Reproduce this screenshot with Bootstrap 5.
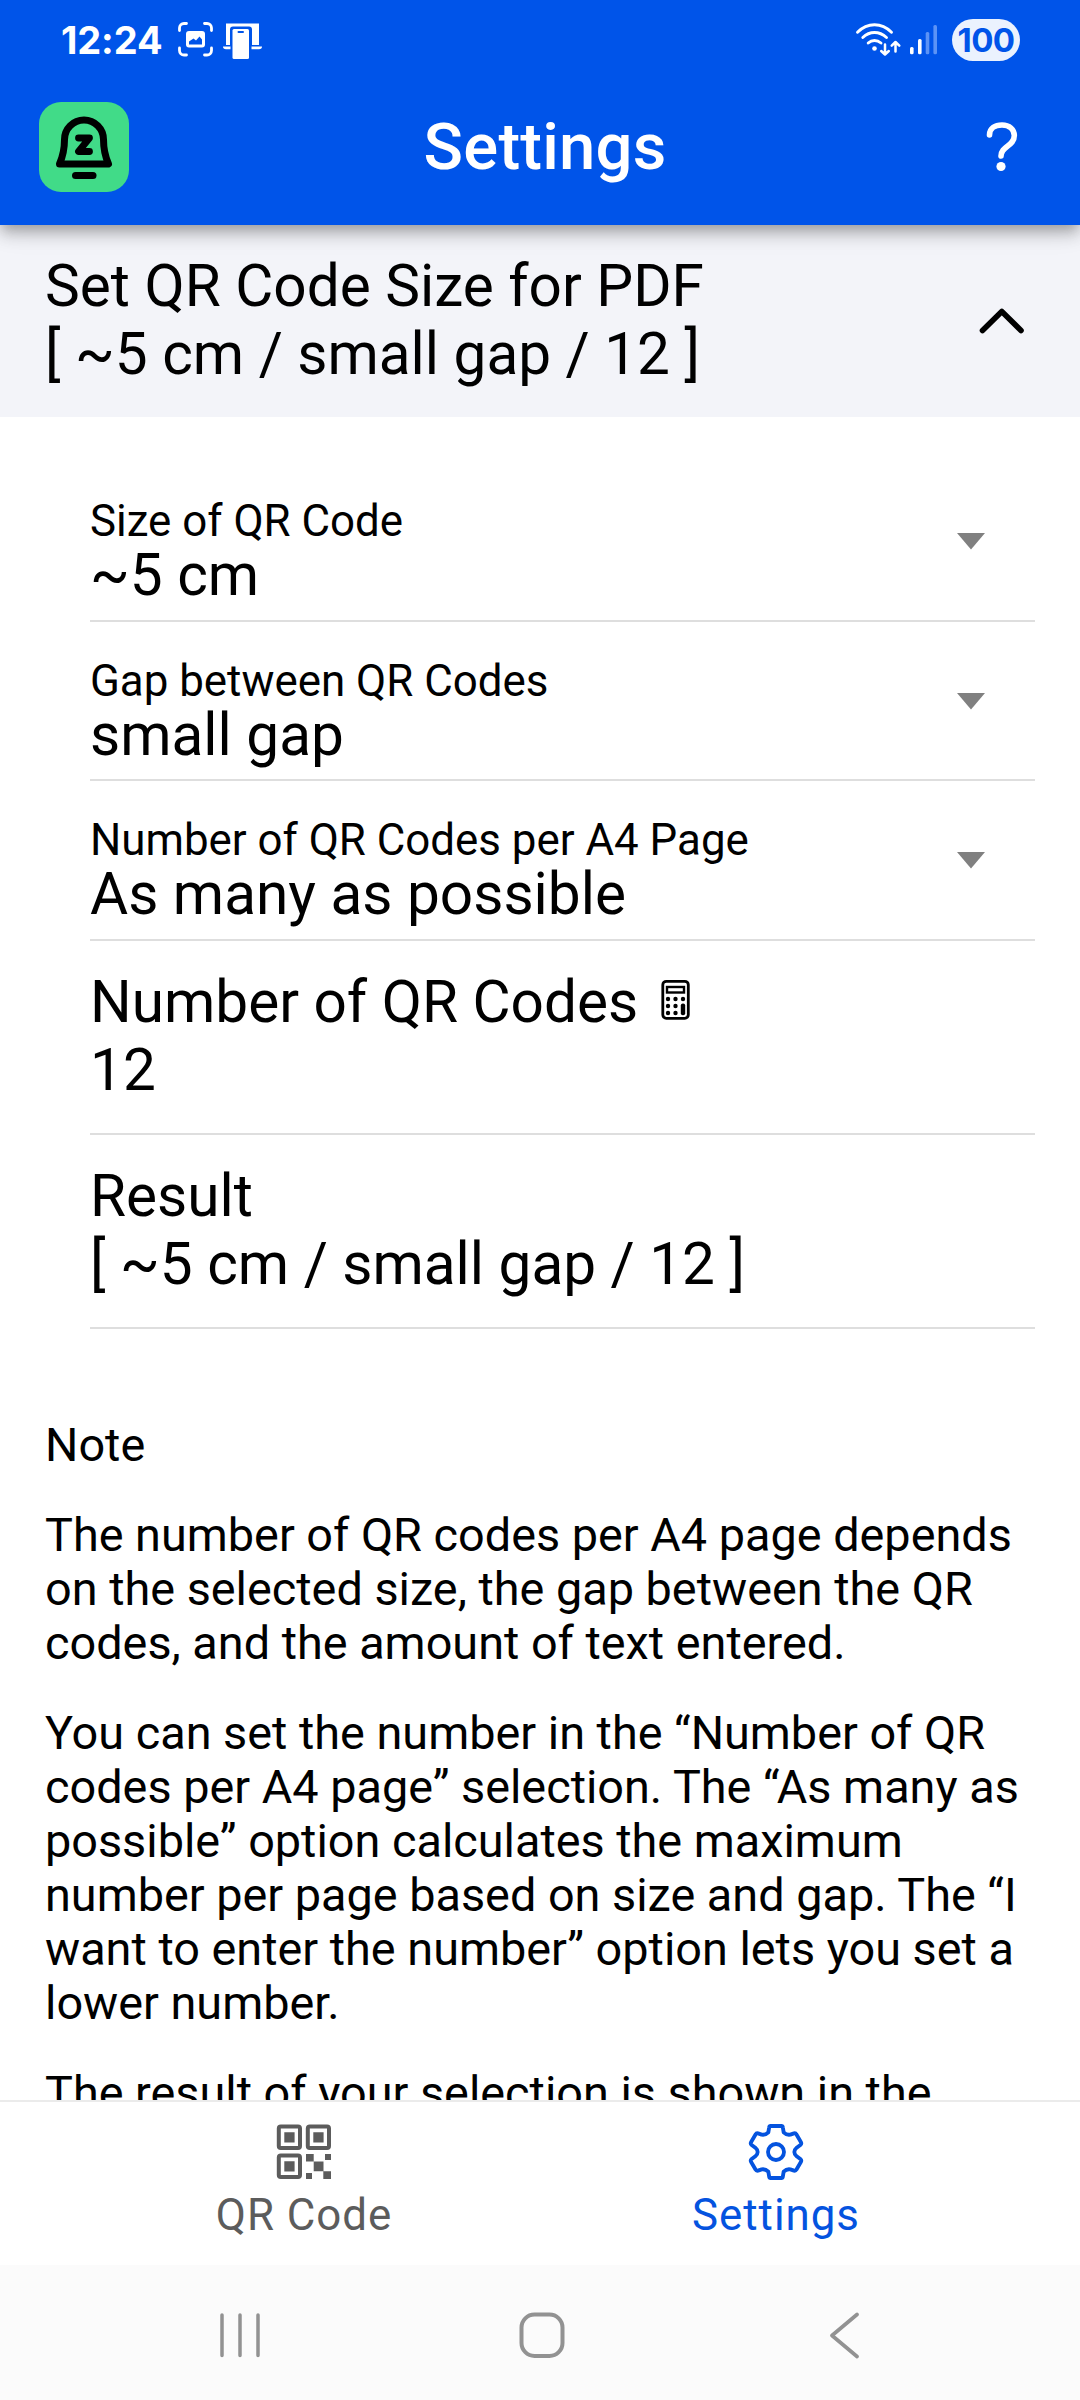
<!DOCTYPE html>
<html lang="en">
<head>
<meta charset="utf-8">
<meta name="viewport" content="width=device-width, initial-scale=1">
<title>Settings</title>
<link href="https://cdn.jsdelivr.net/npm/bootstrap@5.3.0/dist/css/bootstrap.min.css" rel="stylesheet">
<style>
  body { font-family: Roboto, sans-serif; color: #000; background: #fff; }
  svg { display: block; flex: none; }
  .screen { width: 1080px; height: 2400px; }
  .app-header { height: 225px; background: #0054e9; color: #fff; z-index: 2;
    box-shadow: 0 5.6px 11px -2.8px rgba(0,0,0,.2), 0 11px 14px rgba(0,0,0,.14), 0 2.8px 28px rgba(0,0,0,.12); }
  .status-bar { height: 69px; padding: 11px 60px 0 61px; }
  .clock { font: 700 38px/58px Inter, sans-serif; width: 116px; letter-spacing: -.1px; }
  .battery { width: 68px; height: 42px; border-radius: 21px; background: #ebf2fe; color: #0054e9;
    font: 700 33px/42px Inter, sans-serif; letter-spacing: -.6px; margin-left: 14px; }
  .toolbar { height: 156px; padding: 0 60px 0 39px; }
  .toolbar h1 { font-size: 65.2px; font-weight: 500; line-height: 78px; letter-spacing: .2px; }
  .toolbar-start { width: 125px; }
  .toolbar-end { width: 94px; }
  .accordion-head { height: 192px; padding: 0 54px 2px 45px; background: #f3f4f9; }
  .accordion-head svg { margin-top: 2px; }
  .big-text { font-size: 58.5px; line-height: 68px; }
  .option-list { padding: 45.4px 45px 0 90px; }
  .option-row { border-bottom: 2px solid #dedede; }
  .select-row { height: 159.5px; padding: 35.7px 50px 13.8px 0; }
  .select-label { font-size: 43.875px; line-height: 46px; }
  .select-value { font-size: 58.5px; line-height: 62px; }
  .caret { margin-top: 35.2px; }
  .info-row { height: 194px; padding: 27px 0 29px; }
  .calc-icon { margin-left: 22px; margin-bottom: 4px; }
  .note-text { padding: 89px 45px 0; font-size: 46.8px; line-height: 54px; }
  .note-text p { margin-bottom: 36px; white-space: nowrap; }
  .tab-bar { height: 165px; border-top: 2px solid #ebebeb; background: #fff; }
  .tab-item { width: 472px; padding-top: 21px; font-size: 43.875px; letter-spacing: .96px; line-height: 54px; color: #5c5c5c; }
  .tab-item.active { color: #0453df; }
  .tab-item svg { height: 58px; margin-bottom: 7px; }
  .system-nav { height: 135px; background: #fbfbfb; padding: 5px 85px 0 89px; }
  .nav-key { width: 302px; }
</style>
</head>
<body>
<div class="screen d-flex flex-column overflow-hidden">
  <header class="app-header position-relative flex-shrink-0">
    <div class="status-bar d-flex align-items-center">
      <div class="clock">12:24</div>
      <svg width="86" height="40" viewBox="177 21 86 40">
        <g fill="none" stroke="#fff" stroke-width="2.8" stroke-linecap="round">
          <path d="M179.500 31.500V29a4.500 4.500 0 0 1 4.500-4.500h2.500M204.500 24.500h2.500a4.500 4.500 0 0 1 4.500 4.500v2.500M211.500 49v2.500a4.500 4.500 0 0 1-4.500 4.500h-2.500M186.500 56h-2.500a4.500 4.500 0 0 1-4.500-4.500V49"/>
        </g>
        <rect x="186" y="32" width="19" height="16.500" rx="3" fill="#fff"/>
        <path d="M189 45.500V42.500L193.500 39.500 196 41.500 199.500 37.500 202 40.500V45.500Z" fill="#0054e9"/>
        <path d="M226 24.500h33V46h-7V30.500a3 3 0 0 0-3-3h-16a3 3 0 0 0-3 3V46h-4Z" fill="#fff"/>
        <path d="M223 47.500h7.500v2.800h-4.500q-3 0-3-2.800ZM251.500 47.500h10.500q0 2.800-3 2.800h-7.500Z" fill="#fff"/>
        <rect x="232.500" y="30" width="16.500" height="30" rx="1.500" fill="#fff"/>
        <rect x="237.500" y="32" width="6.500" height="2" rx="1" fill="#0054e9"/>
      </svg>
      <svg class="ms-auto" width="84" height="36" viewBox="855 22 84 36">
        <g fill="none" stroke="#fff" stroke-width="2.900" stroke-linecap="round" stroke-linejoin="round">
          <path d="M858.500 32.300Q866 24.800 875.500 24.800T892.500 32.300M863.800 37.500Q869 32.500 875.500 32.500T887.500 37.500M869.200 43Q872 40.500 875.500 40.500T882 43"/>
          <path stroke-width="2.500" d="M886 44.500V54M882.200 51 886 54.500 889.800 51M896.500 51.500V42.500M892.700 45.700 896.500 42 900.300 45.700"/>
        </g>
        <circle cx="875.500" cy="48.500" r="2.300" fill="#fff"/>
        <rect x="911" y="47" width="3.600" height="7.300" rx="1.500" fill="#fff"/>
        <rect x="919" y="39" width="3.600" height="15.300" rx="1.500" fill="#fff"/>
        <rect x="926.700" y="32" width="3.600" height="22.300" rx="1.500" fill="#5c93f6"/>
        <rect x="934.400" y="25" width="3.600" height="29.300" rx="1.500" fill="#5c93f6"/>
      </svg>
      <div class="battery text-center">100</div>
    </div>
    <div class="toolbar d-flex align-items-center justify-content-between">
      <div class="toolbar-start">
        <svg width="90" height="90" viewBox="39 102 90 90">
          <rect x="39" y="102" width="90" height="90" rx="22" fill="#41db88"/>
          <g fill="none" stroke="#000" stroke-width="7" stroke-linecap="round" stroke-linejoin="round">
            <path d="M59.500 164C63 156 64.500 150 64.500 139.500A19.500 19.500 0 0 1 103.500 139.500C103.500 150 105 156 108.500 164Z"/>
            <path d="M75.500 175.500H93"/>
            <path stroke-width="6.800" d="M78.500 138H89.500L78.500 151.500H89.500"/>
          </g>
        </svg>
      </div>
      <h1 class="m-0">Settings</h1>
      <div class="toolbar-end d-flex justify-content-end">
        <svg width="36" height="54" viewBox="984 119 36 54">
          <path d="M989.500 134C989.500 127.500 995 124 1002 124C1009.500 124 1014.300 128.500 1014.300 134.500C1014.300 145.500 1001 145 1001 155" fill="none" stroke="#fff" stroke-width="5.600" stroke-linecap="round"/>
          <circle cx="1001" cy="165.500" r="4.600" fill="#fff"/>
        </svg>
      </div>
    </div>
  </header>

  <main class="flex-fill overflow-hidden">
    <div class="accordion-head d-flex align-items-center justify-content-between">
      <div class="big-text">Set QR Code Size for PDF<br>[ ~5 cm / small gap / 12 ]</div>
      <svg width="48" height="28" viewBox="978 307 48 28"><path d="M982.500 330.500 1001.800 311.500 1021 330.500" fill="none" stroke="#000" stroke-width="5.600" stroke-linecap="round" stroke-linejoin="round"/></svg>
    </div>
    <div class="option-list">
      <div class="option-row select-row d-flex justify-content-between">
        <div><div class="select-label">Size of QR Code</div><div class="select-value">~5 cm</div></div>
        <svg class="caret" width="28" height="17" viewBox="0 0 28 17"><path d="M0 0H28L14 16.500Z" fill="#808080"/></svg>
      </div>
      <div class="option-row select-row d-flex justify-content-between">
        <div><div class="select-label">Gap between QR Codes</div><div class="select-value">small gap</div></div>
        <svg class="caret" width="28" height="17" viewBox="0 0 28 17"><path d="M0 0H28L14 16.500Z" fill="#808080"/></svg>
      </div>
      <div class="option-row select-row d-flex justify-content-between">
        <div><div class="select-label">Number of QR Codes per A4 Page</div><div class="select-value">As many as possible</div></div>
        <svg class="caret" width="28" height="17" viewBox="0 0 28 17"><path d="M0 0H28L14 16.500Z" fill="#808080"/></svg>
      </div>
      <div class="option-row info-row big-text">
        <div class="d-flex align-items-center">Number of QR Codes
          <svg class="calc-icon" width="30" height="42" viewBox="660 979 30 42">
            <rect x="662.800" y="981.300" width="25.500" height="37" rx="3.500" fill="none" stroke="#000" stroke-width="2.800"/>
            <rect x="667" y="987" width="17" height="5.500" fill="none" stroke="#000" stroke-width="2.400"/>
            <g><circle cx="668" cy="999" r="2.200"/><circle cx="675.500" cy="999" r="2.200"/><circle cx="683" cy="999" r="2.200"/><circle cx="668" cy="1006" r="2.200"/><circle cx="675.500" cy="1006" r="2.200"/><circle cx="668" cy="1013" r="2.200"/><circle cx="675.500" cy="1013" r="2.200"/><rect x="680.800" y="1003.500" width="4.400" height="11.700" rx="2"/></g>
          </svg>
        </div>
        <div>12</div>
      </div>
      <div class="option-row info-row big-text">Result<br>[ ~5 cm / small gap / 12 ]</div>
    </div>
    <div class="note-text">
      <p>Note</p>
      <p>The number of QR codes per A4 page depends<br>on the selected size, the gap between the QR<br>codes, and the amount of text entered.</p>
      <p>You can set the number in the “Number of QR<br>codes per A4 page” selection. The “As many as<br>possible” option calculates the maximum<br>number per page based on size and gap. The “I<br>want to enter the number” option lets you set a<br>lower number.</p>
      <p>The result of your selection is shown in the</p>
    </div>
  </main>

  <nav class="tab-bar d-flex justify-content-center flex-shrink-0">
    <div class="tab-item d-flex flex-column align-items-center">
      <svg width="56" viewBox="276 2123 56 58">
        <g fill="none" stroke="#5c5c5c" stroke-width="4"><rect x="278.800" y="2126.500" width="21.200" height="21.500" rx="2"/><rect x="307.800" y="2126.500" width="21.200" height="21.500" rx="2"/><rect x="278.800" y="2155.500" width="21.200" height="21.500" rx="2"/></g>
        <path fill="#5c5c5c" d="M284.300 2132.200h10.300v10.300h-10.300ZM313.300 2132.200h10.300v10.300h-10.300ZM284.300 2161.200h10.300v10.300h-10.300ZM306 2154h7.700v7.500h-7.700ZM325 2154h6v6h-6ZM313.700 2161.500h9.800v9.800h-9.800ZM306 2173h6v6h-6ZM323.300 2171.200h7.700v7.800h-7.700Z"/>
      </svg>
      <div>QR Code</div>
    </div>
    <div class="tab-item active d-flex flex-column align-items-center">
      <svg width="56" viewBox="204 69 168 174">
        <g fill="none" stroke="currentColor" stroke-width="11.500" stroke-linejoin="round"><circle cx="288" cy="156" r="24"/>
        <path d="M272 78H304Q308 78 308.500 82L311 97Q320 106 331 104L342 100Q347 99 349 103L363 127Q365 131 362 134L350 143Q343 149 343 156Q343 163 350 169L362 178Q365 181 363 185L349 209Q347 213 342 212L331 208Q320 206 311 215L308.500 230Q308 234 304 234H272Q268 234 267.500 230L265 215Q256 206 245 208L234 212Q229 213 227 209L213 185Q211 181 214 178L226 169Q233 163 233 156Q233 149 226 143L214 134Q211 131 213 127L227 103Q229 99 234 100L245 104Q256 106 265 97L267.500 82Q268 78 272 78Z"/></g>
      </svg>
      <div>Settings</div>
    </div>
  </nav>

  <div class="system-nav d-flex flex-shrink-0 align-items-center">
    <div class="nav-key d-flex justify-content-center"><svg width="42" height="48" viewBox="0 0 42 48"><path d="M3 4V44.500M21 4V44.500M39 4V44.500" stroke="#929292" stroke-width="3.500" stroke-linecap="round"/></svg></div>
    <div class="nav-key d-flex justify-content-center"><svg width="48" height="48" viewBox="0 0 48 48"><rect x="3.500" y="3.500" width="41" height="41.500" rx="13" fill="none" stroke="#929292" stroke-width="4"/></svg></div>
    <div class="nav-key d-flex justify-content-center"><svg width="30" height="48" viewBox="0 0 30 48"><path d="M28 3.500 3 24.500 28 45.500" fill="none" stroke="#929292" stroke-width="3.700" stroke-linecap="round" stroke-linejoin="round"/></svg></div>
  </div>
</div>
<script src="https://cdn.jsdelivr.net/npm/bootstrap@5.3.0/dist/js/bootstrap.bundle.min.js"></script>
</body>
</html>
